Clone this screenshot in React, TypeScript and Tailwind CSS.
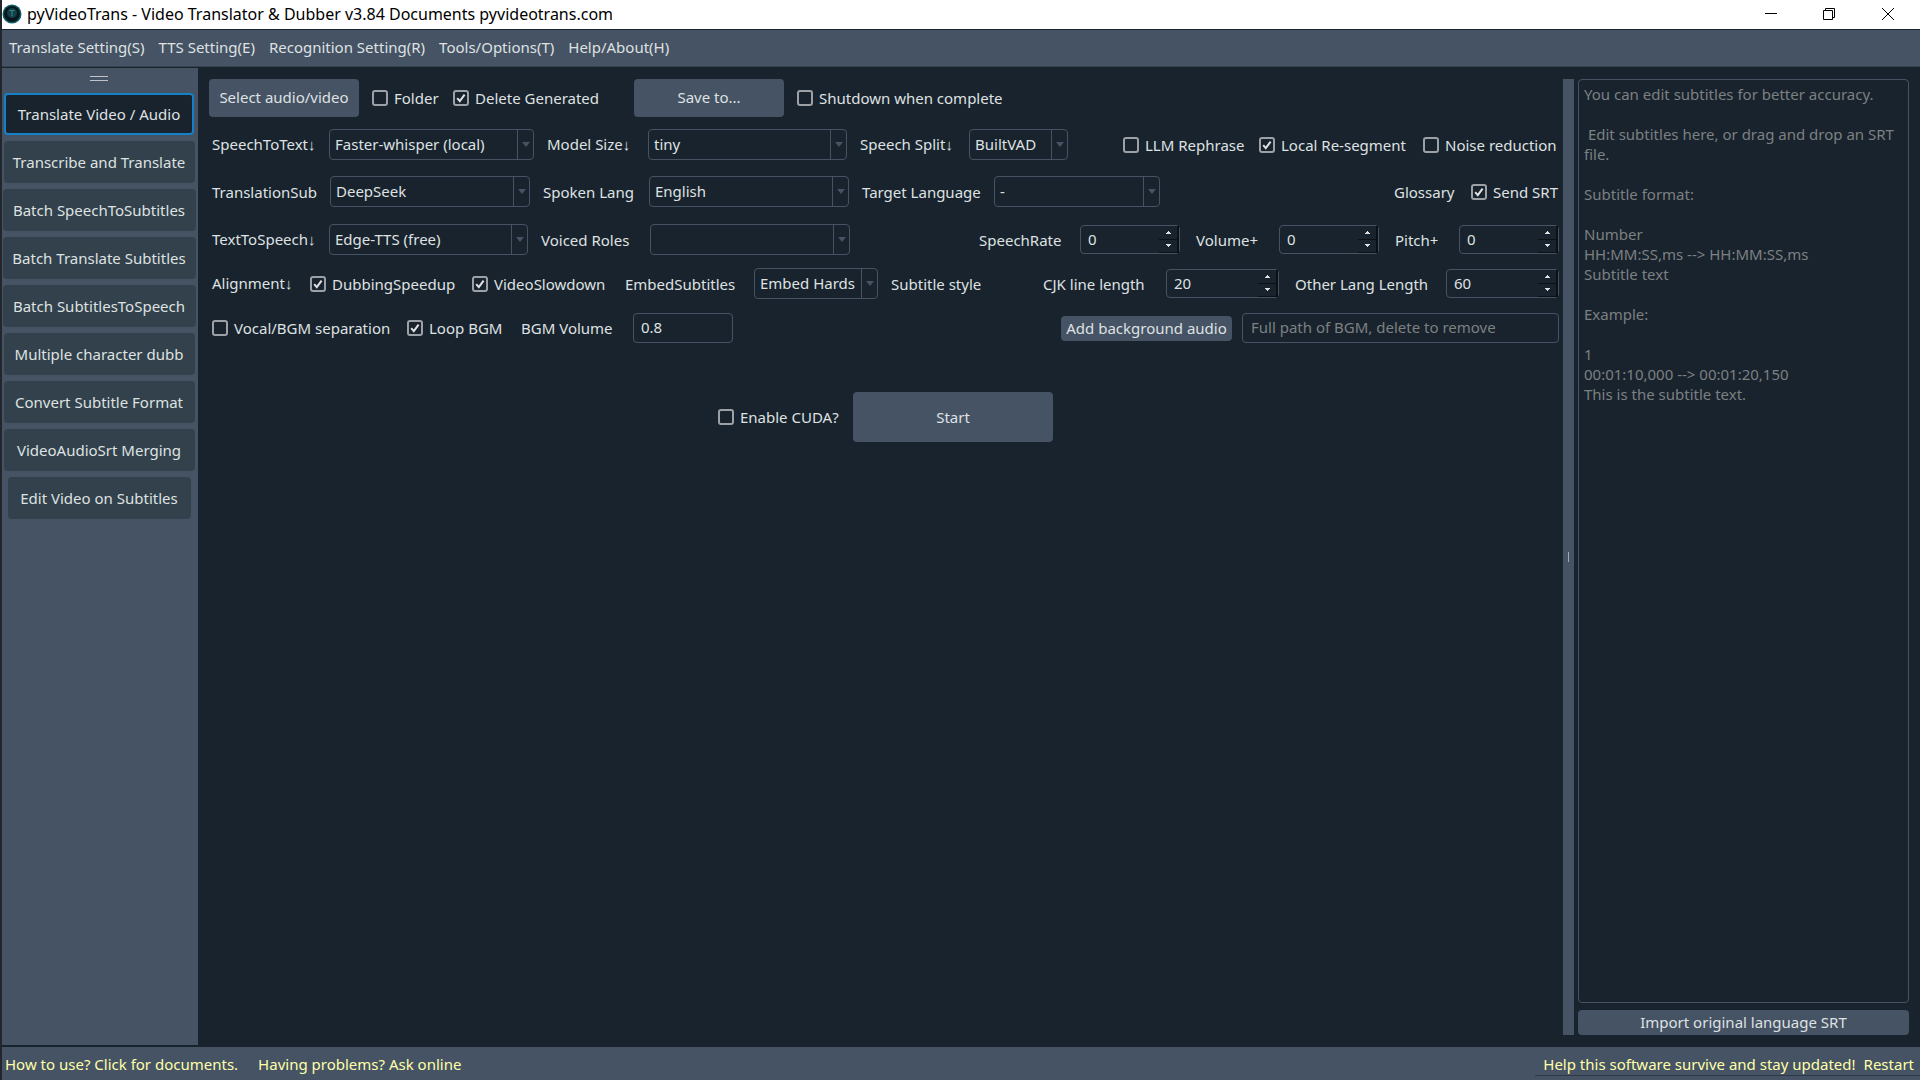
import { useId, type ReactNode } from 'react';

const menus = ['Translate Setting(S)', 'TTS Setting(E)', 'Recognition Setting(R)', 'Tools/Options(T)', 'Help/About(H)'];

const tools = [
  { label: 'Translate Video / Audio', width: 'w-[190px]' },
  { label: 'Transcribe and Translate', width: 'w-[191px]' },
  { label: 'Batch SpeechToSubtitles', width: 'w-[193px]' },
  { label: 'Batch Translate Subtitles', width: 'w-[193px]' },
  { label: 'Batch SubtitlesToSpeech', width: 'w-[193px]' },
  { label: 'Multiple character dubb', width: 'w-[191px]' },
  { label: 'Convert Subtitle Format', width: 'w-[191px]' },
  { label: 'VideoAudioSrt Merging', width: 'w-[191px]' },
  { label: 'Edit Video on Subtitles', width: 'w-[183px]' },
];

const subtitleHint = `You can edit subtitles for better accuracy.

 Edit subtitles here, or drag and drop an SRT file.

Subtitle format:

Number
HH:MM:SS,ms --> HH:MM:SS,ms
Subtitle text

Example:

1
00:01:10,000 --> 00:01:20,150
This is the subtitle text.`;

function Check({ label, checked = false, className = '' }: { label: string; checked?: boolean; className?: string }) {
  return (
    <label className={`flex shrink-0 items-center gap-1.5 ${className}`}>
      <span className="relative size-4 shrink-0">
        <input
          type="checkbox"
          defaultChecked={checked}
          className="peer block size-4 appearance-none rounded-[3px] border-2 border-[#9da1a5]"
        />
        <svg viewBox="0 0 16 16" className="pointer-events-none absolute inset-0 hidden size-4 peer-checked:block">
          <path d="M4.2 8.2 6.8 11.2 11.6 4.6" fill="none" stroke="#dfe1e2" strokeWidth="2" />
        </svg>
      </span>
      <span>{label}</span>
    </label>
  );
}

function Down({ children }: { children: ReactNode }) {
  return (
    <>
      {children}
      <span className="font-['Liberation_Sans',sans-serif]">↓</span>
    </>
  );
}

type FieldProps = { label: ReactNode; labelWidth: string; value: string; width: string };

function Combo({ label, labelWidth, value, width }: FieldProps) {
  const id = useId();
  return (
    <div className="flex shrink-0 items-center">
      <label htmlFor={id} className={labelWidth}>{label}</label>
      <div className={`relative h-[31px] ${width}`}>
        <select
          id={id}
          className="size-full appearance-none rounded border border-[#455364] bg-[#19232d] pr-5 pb-0.5 pl-[5px] text-[#dfe1e2]"
        >
          <option>{value}</option>
        </select>
        <span className="pointer-events-none absolute inset-y-0 right-0 flex w-[17px] items-center justify-center border-l border-[#455364]">
          <svg width="8" height="5" viewBox="0 0 8 5">
            <path d="M0 0h8L4 5z" fill="#455364" />
          </svg>
        </span>
      </div>
    </div>
  );
}

function Spin({ label, labelWidth, value, width }: FieldProps) {
  const id = useId();
  return (
    <div className="flex shrink-0 items-center">
      <label htmlFor={id} className={labelWidth}>{label}</label>
      <div className={`flex h-[29px] rounded border border-[#455364] ${width}`}>
        <input id={id} defaultValue={value} className="w-0 min-w-0 flex-1 bg-transparent pb-0.5 pl-[7px]" />
        <div className="flex w-5 flex-col">
          <button aria-label="Increase" className="flex flex-1 items-center justify-center border-r-2 border-b border-[#0b1015]">
            <svg width="5" height="3" viewBox="0 0 5 3">
              <path d="M0 3V2h1V1h1V0h1v1h1v1h1v1z" fill="#dfe1e2" />
            </svg>
          </button>
          <button aria-label="Decrease" className="flex flex-1 items-center justify-center border-r-2 border-b border-[#0b1015]">
            <svg width="5" height="3" viewBox="0 0 5 3">
              <path d="M0 0h5v1H4v1H3v1H2V2H1V1H0z" fill="#dfe1e2" />
            </svg>
          </button>
        </div>
      </div>
    </div>
  );
}

function Row({ children, className }: { children: ReactNode; className: string }) {
  return <div className={`flex items-center ${className}`}>{children}</div>;
}

export default function App() {
  const volumeId = useId();
  return (
    <div className="flex min-h-screen flex-col border-l-2 border-[#23272b] bg-[#19232d] font-['Noto_Sans','Noto_Sans_CJK_SC',sans-serif] text-[15px] leading-5 whitespace-nowrap text-[#dfe1e2]">
      {/* title bar */}
      <header className="flex h-[29px] items-center bg-white pb-px text-black">
        <svg className="size-5" viewBox="0 0 20 20">
          <circle cx="10" cy="10" r="9.5" fill="#0d5f68" />
          <circle cx="10" cy="10" r="8" fill="#07181d" />
          <circle cx="10" cy="9" r="5" fill="#124048" />
          <path d="M7.5 6.5h5M10 6.5v6" stroke="#39848a" strokeWidth="1" />
        </svg>
        <h1 className="ml-[5px] text-base leading-5">pyVideoTrans - Video Translator &amp; Dubber v3.84 Documents pyvideotrans.com</h1>
        <div className="ml-auto flex pr-0.5">
          <button aria-label="Minimize" className="flex w-[58px] justify-center">
            <svg width="12" height="12" viewBox="0 0 12 12"><path d="M0 5.5h12" stroke="#000" /></svg>
          </button>
          <button aria-label="Restore" className="flex w-[58px] justify-center">
            <svg width="12" height="12" viewBox="0 0 12 12"><path d="M.5 2.5h9v9h-9zM2.5 2.5v-2h9v9h-2" fill="none" stroke="#000" /></svg>
          </button>
          <button aria-label="Close" className="flex w-[60px] justify-center">
            <svg width="12" height="12" viewBox="0 0 12 12"><path d="m0 0 12 12M12 0 0 12" stroke="#000" /></svg>
          </button>
        </div>
      </header>

      <nav className="mt-px flex h-[37px] items-center gap-3.5 border-b border-[#37414f] bg-[#455364] px-[7px] pb-0.5">
        {menus.map((menu) => (
          <button key={menu}>{menu}</button>
        ))}
      </nav>

      <div className="mt-px flex flex-1">
        {/* tool bar */}
        <aside className="mb-0.5 flex w-[196px] shrink-0 flex-col items-center gap-1.5 bg-[#455364] pr-0.5">
          <div className="mt-2 mb-1.5 h-[5px] w-[18px] shrink-0 border-y border-[#c0c4c8]" />
          {tools.map((tool, i) => (
            <button
              key={tool.label}
              className={`h-[42px] shrink-0 rounded ${tool.width} ${
                i === 0 ? 'border-2 border-[#1480c8] bg-[#19232d]' : 'bg-[#32414b]'
              }`}
            >
              {tool.label}
            </button>
          ))}
        </aside>

        <main className="min-w-0 flex-1 pt-[11px] pr-1 pl-3.5">
          <Row className="-ml-[3px] h-[38px]">
            <button className="h-[38px] w-[150px] rounded bg-[#455364] pb-0.5">Select audio/video</button>
            <Check label="Folder" className="ml-[13px] w-[81px]" />
            <Check label="Delete Generated" checked className="w-[181px]" />
            <button className="h-[38px] w-[150px] rounded bg-[#455364] pb-0.5">Save to...</button>
            <Check label="Shutdown when complete" className="ml-[13px]" />
          </Row>

          <Row className="mt-3 gap-[13px]">
            <Combo label={<Down>SpeechToText</Down>} labelWidth="w-[117px]" value="Faster-whisper (local)" width="w-[205px]" />
            <Combo label={<Down>Model Size</Down>} labelWidth="w-[101px]" value="tiny" width="w-[199px]" />
            <Combo label={<Down>Speech Split</Down>} labelWidth="w-[109px]" value="BuiltVAD" width="w-[99px]" />
            <div className="ml-auto flex">
              <Check label="LLM Rephrase" className="w-[136px]" />
              <Check label="Local Re-segment" checked className="w-[164px]" />
              <Check label="Noise reduction" className="w-[136px]" />
            </div>
          </Row>

          <Row className="mt-4 gap-[13px]">
            <Combo label="TranslationSub" labelWidth="w-[118px]" value="DeepSeek" width="w-[200px]" />
            <Combo label="Spoken Lang" labelWidth="w-[106px]" value="English" width="w-[200px]" />
            <Combo label="Target Language" labelWidth="w-[132px]" value="-" width="w-[166px]" />
            <div className="ml-auto flex">
              <span className="w-[77px]">Glossary</span>
              <Check label="Send SRT" checked className="w-[88px]" />
            </div>
          </Row>

          <Row className="mt-[17px] gap-[13px]">
            <Combo label={<Down>TextToSpeech</Down>} labelWidth="w-[117px]" value="Edge-TTS (free)" width="w-[199px]" />
            <Combo label="Voiced Roles" labelWidth="w-[109px]" value="" width="w-[200px]" />
            <div className="ml-auto flex gap-4">
              <Spin label="SpeechRate" labelWidth="w-[101px]" value="0" width="w-[100px]" />
              <Spin label="Volume+" labelWidth="w-[83px]" value="0" width="w-[100px]" />
              <Spin label="Pitch+" labelWidth="w-[64px]" value="0" width="w-[100px]" />
            </div>
          </Row>

          <Row className="mt-[13px]">
            <span className="w-[98px]"><Down>Alignment</Down></span>
            <Check label="DubbingSpeedup" checked className="w-[162px]" />
            <Check label="VideoSlowdown" checked className="w-[153px]" />
            <Combo label="EmbedSubtitles" labelWidth="w-[129px]" value="Embed Hards" width="w-[124px]" />
            <span className="ml-[13px]">Subtitle style</span>
            <div className="ml-auto flex gap-4">
              <Spin label="CJK line length" labelWidth="w-[123px]" value="20" width="w-[113px]" />
              <Spin label="Other Lang Length" labelWidth="w-[151px]" value="60" width="w-[113px]" />
            </div>
          </Row>

          <Row className="mt-3.5">
            <Check label="Vocal/BGM separation" className="w-[195px]" />
            <Check label="Loop BGM" checked className="w-[114px]" />
            <label htmlFor={volumeId} className="w-28">BGM Volume</label>
            <input id={volumeId} defaultValue="0.8" className="h-[30px] w-[100px] rounded border border-[#455364] px-[7px] pb-0.5" />
            <button className="ml-auto h-[25px] w-[171px] rounded bg-[#455364]">Add background audio</button>
            <input
              aria-label="Background audio path"
              placeholder="Full path of BGM, delete to remove"
              className="ml-2.5 h-[30px] w-[317px] rounded border border-[#455364] px-2 pb-0.5 placeholder:text-[#7c8082]"
            />
          </Row>

          <Row className="mt-[49px] justify-center gap-[11px]">
            <Check label="Enable CUDA?" className="w-[124px]" />
            <button className="h-[50px] w-[200px] rounded bg-[#455364]">Start</button>
          </Row>
        </main>

        {/* splitter */}
        <div className="mt-[11px] mb-3 flex w-[11px] shrink-0 items-center justify-center bg-[#455364]">
          <div className="h-2.5 w-px bg-[#9da9b5]" />
        </div>

        <section className="mt-[11px] mr-[11px] mb-3 ml-1 flex w-[331px] shrink-0 flex-col gap-[7px]">
          <textarea
            aria-label="Subtitles"
            placeholder={subtitleHint}
            className="flex-1 resize-none rounded border border-[#455364] px-[5px] py-1 whitespace-pre-wrap placeholder:text-[#7c8082]"
          />
          <button className="h-[25px] rounded bg-[#455364] pb-0.5">Import original language SRT</button>
        </section>
      </div>

      <footer className="flex h-[33px] items-center bg-[#455364] pl-[3px] text-[#ffffa8]">
        <a href="#docs">How to use? Click for documents.</a>
        <a href="#ask" className="ml-5">Having problems? Ask online</a>
        <div className="ml-auto flex h-[29px] items-center gap-2 self-start border-b border-[#2c3947] pt-1.5 pr-[6px] pl-2">
          <a href="#donate">Help this software survive and stay updated!</a>
          <a href="#restart">Restart</a>
        </div>
      </footer>
    </div>
  );
}
